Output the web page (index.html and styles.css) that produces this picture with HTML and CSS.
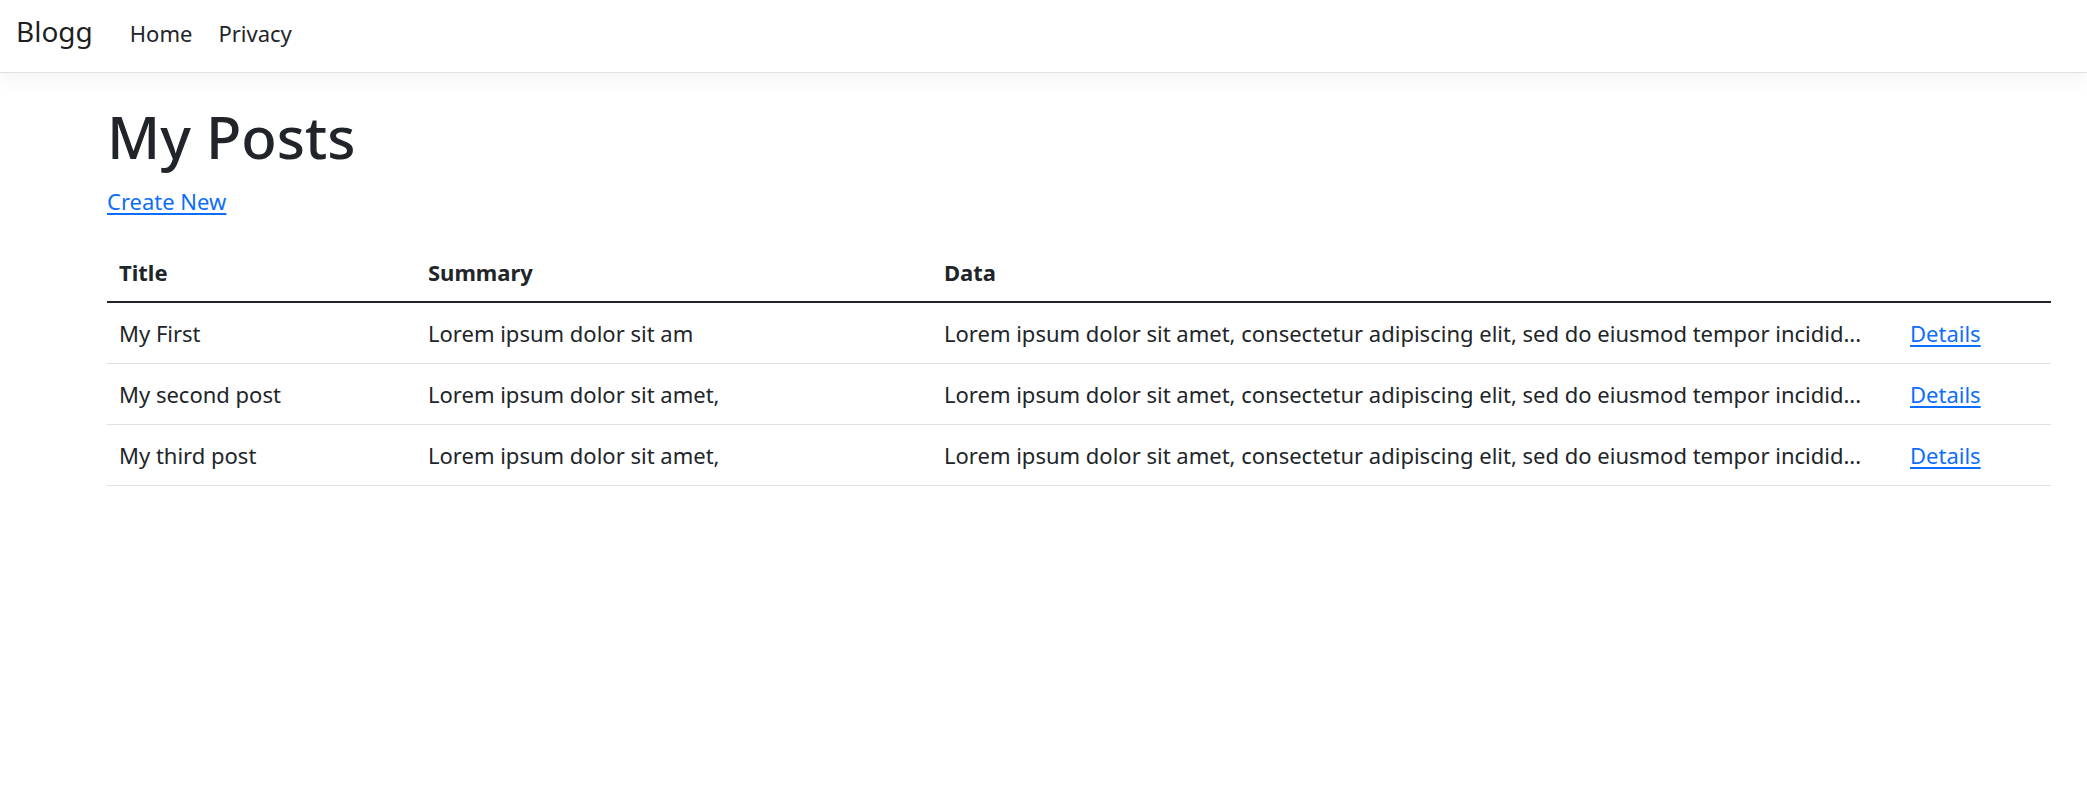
FILE: index.html
```html
<!DOCTYPE html>
<html lang="en">
<head>
<meta charset="utf-8">
<title>My Posts - Blogg</title>
<link rel="stylesheet" href="styles.css">
</head>
<body>
<header class="navbar">
  <a class="brand" href="#">Blogg</a>
  <nav class="nav-links">
    <a class="nav-link" href="#">Home</a>
    <a class="nav-link" href="#">Privacy</a>
  </nav>
</header>
<main class="main">
  <h1 class="page-title">My Posts</h1>
  <p class="actions"><a class="link" href="#">Create New</a></p>
  <table class="posts">
    <colgroup>
      <col class="col-title">
      <col class="col-summary">
      <col class="col-data">
      <col class="col-actions">
    </colgroup>
    <thead>
      <tr>
        <th>Title</th>
        <th>Summary</th>
        <th>Data</th>
        <th></th>
      </tr>
    </thead>
    <tbody>
      <tr>
        <td>My First</td>
        <td>Lorem ipsum dolor sit am</td>
        <td class="data">Lorem ipsum dolor sit amet, consectetur adipiscing elit, sed do eiusmod tempor incidid...</td>
        <td><a class="link" href="#">Details</a></td>
      </tr>
      <tr>
        <td>My second post</td>
        <td>Lorem ipsum dolor sit amet,</td>
        <td class="data">Lorem ipsum dolor sit amet, consectetur adipiscing elit, sed do eiusmod tempor incidid...</td>
        <td><a class="link" href="#">Details</a></td>
      </tr>
      <tr>
        <td>My third post</td>
        <td>Lorem ipsum dolor sit amet,</td>
        <td class="data">Lorem ipsum dolor sit amet, consectetur adipiscing elit, sed do eiusmod tempor incidid...</td>
        <td><a class="link" href="#">Details</a></td>
      </tr>
    </tbody>
  </table>
</main>
</body>
</html>
```

FILE: styles.css
```css
* {
  box-sizing: border-box;
}

html, body {
  margin: 0;
  padding: 0;
  background: #fff;
}

body {
  font-family: "Noto Sans", "Open Sans", sans-serif;
  font-size: 22px;
  line-height: 36px;
  color: #212529;
}

.navbar {
  display: flex;
  align-items: baseline;
  height: 73px;
  padding: 13px 16px 0 16px;
  background: #fff;
  border-bottom: 1px solid #dee2e6;
  box-shadow: 0 6px 18px rgba(0, 0, 0, 0.05);
  position: relative;
}

.brand {
  font-size: 28px;
  line-height: 36px;
  color: rgba(0, 0, 0, 0.9);
  text-decoration: none;
  margin-right: 37px;
}

.nav-links {
  display: flex;
  align-items: baseline;
  gap: 26px;
}

.nav-link {
  color: #212529;
  text-decoration: none;
}

.main {
  padding: 29px 36px 0 107px;
}

.page-title {
  margin: 0 0 11px 0;
  font-size: 58px;
  line-height: 70px;
  font-weight: 500;
  color: #212529;
}

.actions {
  margin: 0 0 23px 0;
}

.link {
  color: #0d6efd;
  text-decoration: underline;
  text-underline-offset: 3px;
}

.posts {
  width: 100%;
  border-collapse: collapse;
  table-layout: fixed;
}

.col-title { width: 309px; }
.col-summary { width: 516px; }
.col-data { width: 966px; }
.col-actions { width: 153px; }

.posts th,
.posts td {
  padding: 12px;
  text-align: left;
  vertical-align: top;
}

.posts th {
  font-weight: 700;
  padding-bottom: 11px;
  border-bottom: 2px solid #212529;
}

.posts td {
  border-bottom: 1px solid #dee2e6;
}

.posts .data {
  white-space: nowrap;
  overflow: hidden;
}
```
